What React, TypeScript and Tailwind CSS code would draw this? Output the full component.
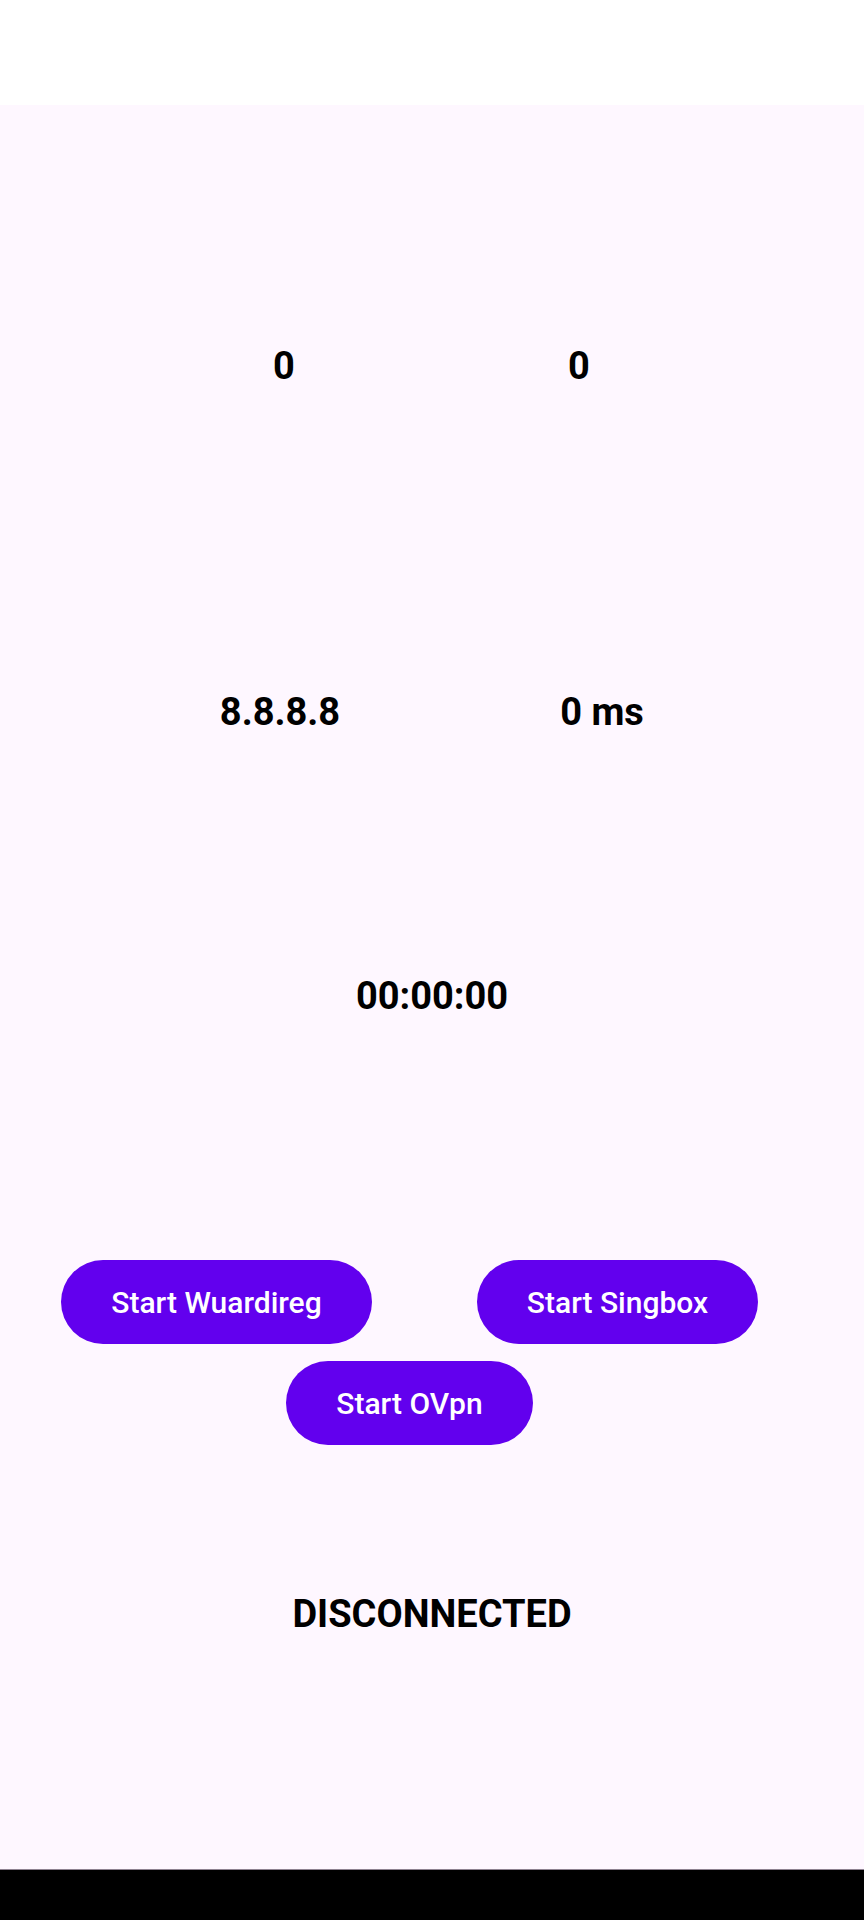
const font = { fontFamily: "Roboto, 'Noto Sans', sans-serif" };

function Value({ text, className }: { text: string; className: string }) {
  return (
    <div className={`text-center text-[38px] leading-[38px] font-bold text-black ${className}`}>
      {text}
    </div>
  );
}

function VpnButton({ label, className }: { label: string; className: string }) {
  return (
    <button
      type="button"
      className={`flex h-[84px] items-center justify-center rounded-full bg-[#6200ee] text-[30px] font-medium text-white ${className}`}
    >
      {label}
    </button>
  );
}

export default function App() {
  return (
    <div className="flex min-h-screen flex-col bg-white" style={font}>
      <div className="h-[105px] bg-white" />
      <main className="flex h-[1764px] flex-col bg-[#fef7ff]">
        {/* traffic counters */}
        <div className="mt-[242px] flex">
          <Value text="0" className="ml-[224px] w-[120px]" />
          <Value text="0" className="ml-[175px] w-[120px]" />
        </div>

        {/* server + ping */}
        <div className="mt-[308px] flex">
          <Value text="8.8.8.8" className="ml-[200px] w-[160px]" />
          <Value text="0 ms" className="ml-[162px] w-[160px]" />
        </div>

        {/* session timer */}
        <Value text="00:00:00" className="mt-[246px] w-full" />

        <div className="mt-[245px] flex">
          <VpnButton label="Start Wuardireg" className="ml-[61px] w-[311px]" />
          <VpnButton label="Start Singbox" className="ml-[105px] w-[281px]" />
        </div>
        <div className="mt-[17px] flex">
          <VpnButton label="Start OVpn" className="ml-[286px] w-[247px]" />
        </div>

        <Value text="DISCONNECTED" className="mt-[150px] w-full" />
      </main>
      <div className="h-[51px] border-t border-[#8d8190] bg-black" />
    </div>
  );
}
